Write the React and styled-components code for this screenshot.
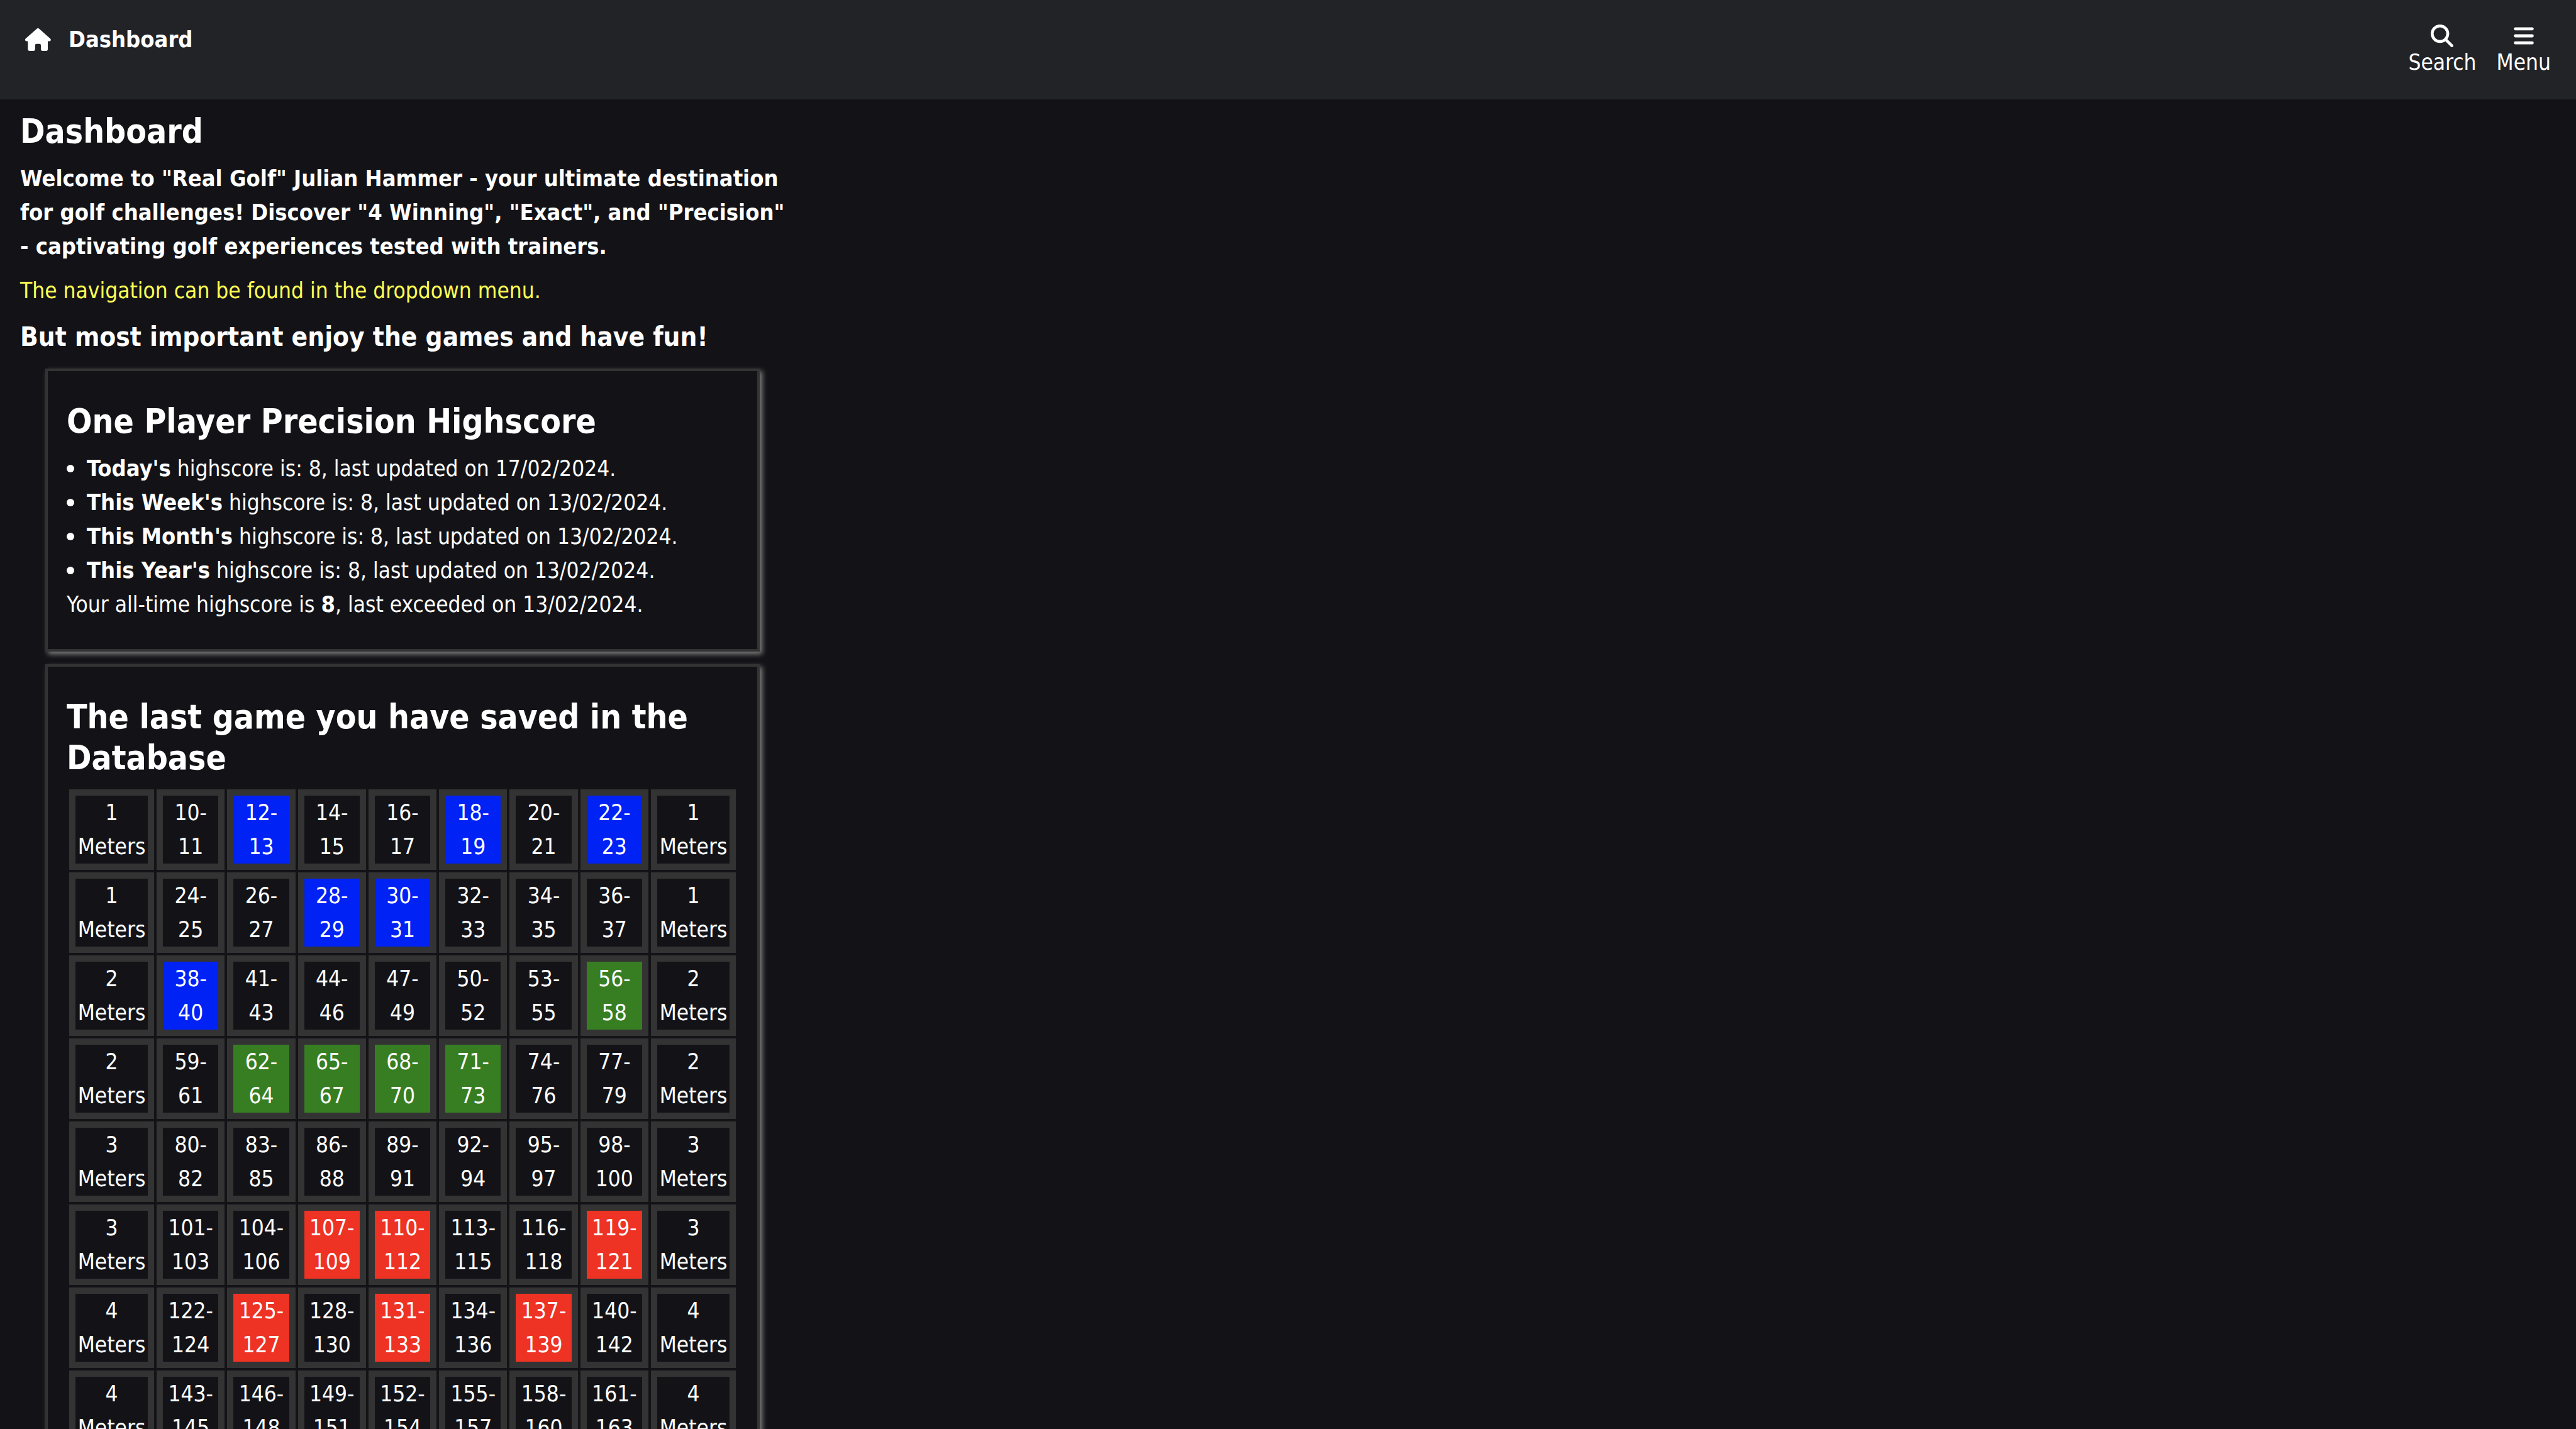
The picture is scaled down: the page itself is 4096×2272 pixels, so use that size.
import React from "react";
import styled, { createGlobalStyle } from "styled-components";

const GlobalStyle = createGlobalStyle`
  *, *::before, *::after { box-sizing: border-box; }
  body {
    margin: 0;
    background: #131317;
    color: #fff;
    font: 35px/54px Tahoma, "DejaVu Sans Condensed", "DejaVu Sans", sans-serif;
  }
  h1, h2, h3, p, ul { margin: 0; padding: 0; }
  strong { font-size: 36px; }
`;

const Header = styled.header`
  display: flex;
  align-items: flex-start;
  justify-content: space-between;
  padding: 36px 40px 37px;
  background: #222327;
`;

const HomeLink = styled.a`
  display: flex;
  align-items: center;
  gap: 28px;
  color: inherit;
  font-size: 36px;
  font-weight: bold;
  text-decoration: none;
`;

const Actions = styled.nav`
  display: flex;
  gap: 32px;
  padding-top: 3px;
`;

const ActionButton = styled.button`
  display: flex;
  flex-direction: column;
  align-items: center;
  gap: 2px;
  padding: 0;
  border: 0;
  background: none;
  color: inherit;
  font: inherit;
  line-height: 44px;
  cursor: pointer;
`;

const Main = styled.main`
  width: 100%;
  max-width: 1280px;
  padding: 18px 32px 48px;
`;

const PageTitle = styled.h1`
  margin-bottom: 16px;
  font-size: 53px;
  line-height: 65px;
`;

const Intro = styled.p`
  margin-bottom: 16px;
  font-size: 36px;
  font-weight: bold;
`;

const Hint = styled.p`
  margin-bottom: 22px;
  color: #ffff54;
`;

const Tagline = styled.h3`
  margin-bottom: 25px;
  font-size: 42px;
  line-height: 50px;
`;

const Cards = styled.div`
  display: flex;
  flex-direction: column;
  gap: 20px;
  padding: 0 40px;
`;

const Card = styled.section`
  padding: 47px 30px 44px;
  border: 4px solid #333;
  box-shadow: 4px 4px 8px #808080;
`;

const CardTitle = styled.h2`
  margin-bottom: 14px;
  font-size: 53px;
  line-height: 65px;
`;

const ScoreList = styled.ul`
  margin-top: 16px;
  list-style: none;
`;

const ScoreItem = styled.li`
  &::before {
    content: "";
    display: inline-block;
    width: 12px;
    height: 12px;
    margin-right: 20px;
    border-radius: 50%;
    background: currentColor;
    vertical-align: 6px;
  }
`;

const GameTable = styled.table`
  width: 100%;
  table-layout: fixed;
  border-collapse: separate;
  border-spacing: 4px;
  text-align: center;
`;

const MetersCol = styled.col`
  width: 135px;
`;

const fills = { blue: "#0022f5", green: "#377e22", red: "#ee3224" };

const Cell = styled.td`
  padding: 0;
  border: 10px solid #333;
  background: ${({ $hit }) => fills[$hit] || "transparent"};
  background-clip: padding-box;
`;

const HomeIcon = () => (
  <svg width="41" height="36" viewBox="0 0 41 36" fill="currentColor" aria-hidden="true">
    <path d="M18.5.8a2.8 2.8 0 0 1 3.8 0L40 16.6c1.6 1.6.6 4-1.5 4H36v13a2.4 2.4 0 0 1-2.4 2.4h-6.2a2.4 2.4 0 0 1-2.4-2.4V27a2.3 2.3 0 0 0-2.3-2.3h-4.6a2.3 2.3 0 0 0-2.3 2.3v6.6a2.4 2.4 0 0 1-2.4 2.4H6.7a2.4 2.4 0 0 1-2.4-2.4v-13H2.1c-2.1 0-2.9-2.4-1.5-4z" />
  </svg>
);

const SearchIcon = () => (
  <svg width="36" height="36" viewBox="0 0 36 36" fill="none" stroke="currentColor" strokeWidth="4.6" strokeLinecap="round" aria-hidden="true">
    <circle cx="14.7" cy="14.6" r="12.4" />
    <path d="M23.8 23.8l9.8 9.8" />
  </svg>
);

const MenuIcon = () => (
  <svg width="36" height="36" viewBox="0 0 36 36" fill="none" stroke="currentColor" strokeWidth="4.8" strokeLinecap="round" aria-hidden="true">
    <path d="M4.6 6.8h26.8M4.6 18h26.8M4.6 29.2h26.8" />
  </svg>
);

const scores = [
  ["Today's", "17/02/2024"],
  ["This Week's", "13/02/2024"],
  ["This Month's", "13/02/2024"],
  ["This Year's", "13/02/2024"],
];

const rows = [
  { meters: 1, start: 10, span: 2, hits: { 1: "blue", 4: "blue", 6: "blue" } },
  { meters: 1, start: 24, span: 2, hits: { 2: "blue", 3: "blue" } },
  { meters: 2, start: 38, span: 3, hits: { 0: "blue", 6: "green" } },
  { meters: 2, start: 59, span: 3, hits: { 1: "green", 2: "green", 3: "green", 4: "green" } },
  { meters: 3, start: 80, span: 3, hits: {} },
  { meters: 3, start: 101, span: 3, hits: { 2: "red", 3: "red", 6: "red" } },
  { meters: 4, start: 122, span: 3, hits: { 1: "red", 3: "red", 5: "red" } },
  { meters: 4, start: 143, span: 3, hits: {} },
];

const columns = [0, 1, 2, 3, 4, 5, 6];

function GameRow({ meters, start, span, hits }) {
  return (
    <tr>
      <Cell>{meters} Meters</Cell>
      {columns.map((i) => {
        const from = start + i * span;
        return (
          <Cell key={i} $hit={hits[i]}>
            {from}-<wbr />{from + span - 1}
          </Cell>
        );
      })}
      <Cell>{meters} Meters</Cell>
    </tr>
  );
}

export default function App() {
  return (
    <>
      <GlobalStyle />
      <Header>
        <HomeLink href="#dashboard">
          <HomeIcon />
          Dashboard
        </HomeLink>
        <Actions>
          <ActionButton type="button"><SearchIcon />Search</ActionButton>
          <ActionButton type="button"><MenuIcon />Menu</ActionButton>
        </Actions>
      </Header>
      <Main id="dashboard">
        <PageTitle>Dashboard</PageTitle>
        <Intro>
          Welcome to "Real Golf" Julian Hammer - your ultimate destination for golf challenges!
          Discover "4 Winning", "Exact", and "Precision" - captivating golf experiences tested
          with trainers.
        </Intro>
        <Hint>The navigation can be found in the dropdown menu.</Hint>
        <Tagline>But most important enjoy the games and have fun!</Tagline>
        <Cards>
          <Card>
            <CardTitle>One Player Precision Highscore</CardTitle>
            <ScoreList>
              {scores.map(([label, date]) => (
                <ScoreItem key={label}>
                  <strong>{label}</strong> highscore is: 8, last updated on {date}.
                </ScoreItem>
              ))}
            </ScoreList>
            <p>Your all-time highscore is <strong>8</strong>, last exceeded on 13/02/2024.</p>
          </Card>
          <Card>
            <CardTitle>The last game you have saved in the Database</CardTitle>
            <GameTable>
              <colgroup>
                <MetersCol />
                {columns.map((i) => <col key={i} />)}
                <MetersCol />
              </colgroup>
              <tbody>
                {rows.map((row) => <GameRow key={row.start} {...row} />)}
              </tbody>
            </GameTable>
          </Card>
        </Cards>
      </Main>
    </>
  );
}
